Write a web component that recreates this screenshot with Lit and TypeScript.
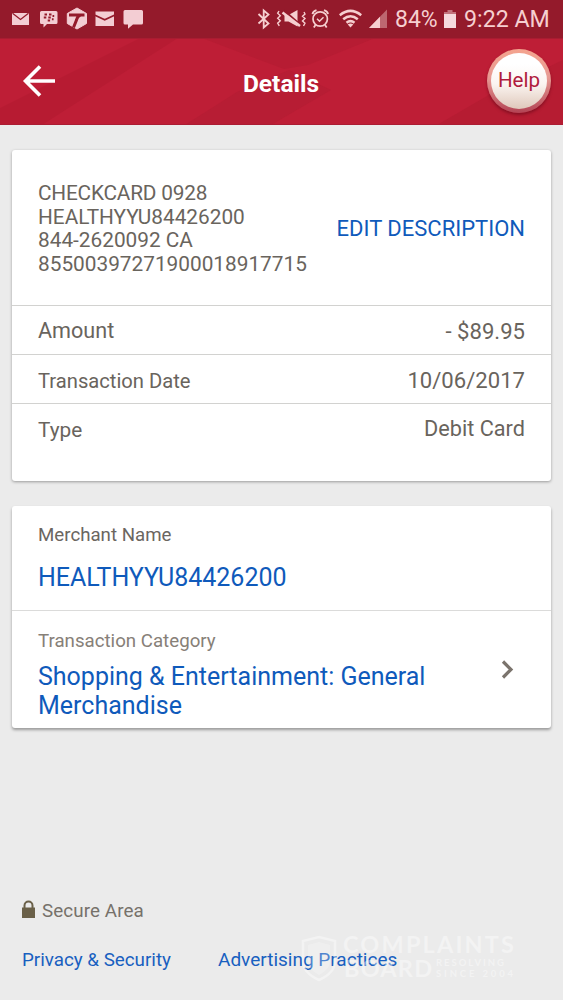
import { LitElement, html, css } from "lit";
import { customElement } from "lit/decorators.js";

@customElement("status-bar")
class StatusBar extends LitElement {
  static styles = css`
    :host { display: flex; height: 38px; background: #941a2b; color: #f6cfd0; font-size: 23.2px; line-height: 39px; white-space: nowrap; }
    svg { display: block; flex: none; }
    .right { margin-left: 107px; }
    .pct { margin-left: 5px; width: 49px; font-size: 23px; }
    .time { margin-left: 8px; }
  `;
  render() {
    return html`
      <svg width="150" height="38" viewBox="0 0 150 38" fill="#f3cdd3">
        <path d="M12 13h17v12H12z" />
        <path d="M12.5 13.3l8 6.2 8-6.2" fill="none" stroke="#941a2b" stroke-width="1.3" />
        <path d="M41.500 11h14.500q1.500 0 1.500 1.500v10q0 1.500-1.500 1.500H47l-3.500 3.500V24h-2q-1.500 0-1.500-1.500v-10q0-1.500 1.500-1.500z" />
        <path d="M44.500 14.500h2.500M49 14.500h2.500M43.800 17.500h2.500M48.300 17.500h2.500M52.500 16h1.700M47.700 20.500h2.400M51.900 19.200h1.700" stroke="#941a2b" stroke-width="1.900" fill="none" />
        <path d="M77 8l9.500 5.500v10L77 29l-9.700-5.500v-10z" stroke="#f3cdd3" stroke-linejoin="round" />
        <path d="M69 15h15.500M80.500 15q-3 1-4 5l-3 7.500" stroke="#941a2b" stroke-width="3" fill="none" />
        <path d="M95.500 11.500h18.500v14.500H95.500z" />
        <path d="M95 15.200l9.700 4.600 9.700-4.600" fill="none" stroke="#941a2b" stroke-width="1.700" />
        <path d="M125 10h16.500q1.500 0 1.500 1.500v11.500q0 1.500-1.500 1.500h-8.500l-5 4.200v-4.200h-3q-1.500 0-1.500-1.500V11.500q0-1.500 1.500-1.500z" />
      </svg>
      <svg class="right" width="133" height="38" viewBox="257 0 133 38" fill="none" stroke="#f6cfd0">
        <path d="M258.500 14l10 9.500-4.800 4V10.500l4.800 4-10 9" stroke-width="1.800" />
        <path d="M279 11l-1.300 2.200 2.600 2.500-2.600 2.500 2.600 2.500-2.600 2.500 1.600 2.600M304 12l1 2-2.500 2.300 2.500 2.300-2.500 2.300 2.500 2.300-1.500 2.800" stroke-width="1.400" />
        <path d="M284.500 15h4l9-5v16.500l-9-5h-4z" fill="#f6cfd0" stroke="none" />
        <path d="M284 10.500l16 14" stroke="#941a2b" stroke-width="2.200" />
        <path d="M282.500 12.500l17.500 13.500" stroke-width="2.500" />
        <circle cx="320.200" cy="19" r="7.200" stroke-width="1.700" />
        <path d="M317 18.800l2.500 2.500 4-4" stroke-width="1.500" />
        <path d="M312.500 14.200q.5-3 4-4M328 14.200q-.5-3-4-4M315.500 25l-1.700 2.500M325 25l1.700 2.500" stroke-width="1.800" />
        <path d="M339.800 15.200q10.700-8.600 21.400 0M343.200 19.200q7.300-6 14.600 0M346.500 22.700q4-3.200 8 0" stroke-width="2.500" />
        <path d="M347.700 24.500q2.800-1.800 5.600 0l-2.800 3z" fill="#f6cfd0" stroke="none" />
        <path d="M387 9.500V28h-18z" fill="#bd6770" stroke="none" />
        <path d="M380 16.700V28h-11z" fill="#f6cfd0" stroke="none" />
      </svg>
      <span class="pct">84%</span>
      <svg width="12" height="38" viewBox="0 0 12 38"><path d="M3.500 10h5v2H12v2H0v-2h3.500z" fill="#c3727c" /><path d="M0 14h12v14H0z" fill="#f6d9dd" /></svg>
      <span class="time">9:22 AM</span>
    `;
  }
}

@customElement("page-header")
class PageHeader extends LitElement {
  static styles = css`
    :host { display: grid; grid-template-columns: 80px 1fr 80px; align-items: center; height: 87px; position: relative; background: #be1e36; color: #fff; overflow: hidden; }
    .pattern { position: absolute; inset: 0; }
    .back { position: relative; margin: -2px 0 0 22px; display: block; }
    .title { position: relative; text-align: center; font-weight: 700; font-size: 24.5px; line-height: 28px; padding: 5px 1px 0 0; }
    .help { position: relative; box-sizing: border-box; width: 64px; height: 64px; margin: -1px 0 0 4px; border-radius: 50%; padding: 4px;
      background: linear-gradient(#f4a48f, #e79a93 45%, #b34354); box-shadow: 0 2px 3px rgba(90, 5, 20, 0.5); }
    .face { display: block; height: 56px; border-radius: 50%; background: linear-gradient(#fff 20%, #fbf5f1 55%, #dfc8bb); color: #b01c3d; font-size: 20.6px; line-height: 55px; text-align: center; white-space: nowrap; }
  `;
  render() {
    return html`
      <svg class="pattern" width="563" height="87" viewBox="0 0 563 87">
        <path d="M0 70L140 0h38L42 87H0z" fill="#b41b32" opacity=".75" />
        <path d="M202 0h173L308 27l-24 4z" fill="#b41b32" opacity=".7" />
        <path d="M185 87l52-33 52-22 42 20-60 35z" fill="#b01b31" opacity=".5" />
        <path d="M437 87l50-29 76-36v65z" fill="#b01b31" opacity=".6" />
        <path d="M0 .5h563" stroke="#a91c31" />
        <path d="M0 86.500h563" stroke="#ab1c33" />
      </svg>
      <svg class="back" width="34" height="34" viewBox="0 0 34 34" fill="none" stroke="#fff" stroke-width="3.600"><path d="M33 17H4M18 2.500L3.500 17 18 31.500" /></svg>
      <span class="title">Details</span>
      <span class="help"><span class="face">Help</span></span>
    `;
  }
}

@customElement("transaction-card")
class TransactionCard extends LitElement {
  static styles = css`
    :host { display: block; box-sizing: border-box; height: 330.500px; background: #fff; border-radius: 3px; color: #69645d; box-shadow: 0 1px 3px rgba(0, 0, 0, 0.35); }
    .top { display: flex; justify-content: space-between; align-items: center; box-sizing: border-box; height: 155px; padding: 0 26px; }
    .desc { font-size: 20.8px; line-height: 23.5px; white-space: pre; padding-top: 3px; }
    .desc .first { letter-spacing: -0.2px; }
    .edit { color: #0f5abb; font-size: 22px; padding-top: 2px; }
    .row { display: flex; justify-content: space-between; box-sizing: border-box; height: 49.200px; padding: 0 26px; border-top: 1px solid #d2d2d0; line-height: 50px; }
    .label { font-size: 20.2px; padding-top: 1px; }
    .amount { font-size: 21.6px; padding-top: 0; }
    .type { font-size: 20.8px; }
    .value { font-size: 22.1px; }
    .type + .value { font-size: 21.7px; }
  `;
  rows = [["Amount", "- $89.95", "label amount"], ["Transaction Date", "10/06/2017", "label"], ["Type", "Debit Card", "label type"]];
  render() {
    return html`
      <div class="top">
        <div class="desc"><span class="first">CHECKCARD 0928</span>${"\nHEALTHYYU84426200\n844-2620092 CA\n85500397271900018917715"}</div>
        <span class="edit">EDIT DESCRIPTION</span>
      </div>
      ${this.rows.map(([l, v, c]) => html`<div class="row"><span class=${c}>${l}</span><span class="value">${v}</span></div>`)}
    `;
  }
}

@customElement("merchant-card")
class MerchantCard extends LitElement {
  static styles = css`
    :host { display: block; box-sizing: border-box; height: 222px; background: #fff; border-radius: 3px; box-shadow: 0 2px 3px rgba(0, 0, 0, 0.35); }
    .merchant { box-sizing: border-box; height: 104px; padding: 17px 26px 0; }
    .label { color: #6b665f; font-size: 18.700px; line-height: 24px; }
    .label.light { color: #878078; }
    .name { color: #0f5abb; font-size: 25px; line-height: 29.500px; }
    .merchant .name { margin-top: 16px; }
    .category { display: flex; justify-content: space-between; box-sizing: border-box; height: 118px; padding: 18px 36px 0 26px; border-top: 1px solid #dbdbda; }
    .category .name { white-space: pre; margin-top: 9px; }
    svg { margin-top: 31px; }
  `;
  render() {
    return html`
      <div class="merchant"><div class="label">Merchant Name</div><div class="name">HEALTHYYU84426200</div></div>
      <div class="category">
        <div><div class="label light">Transaction Category</div><div class="name">${"Shopping & Entertainment: General\nMerchandise"}</div></div>
        <svg width="15" height="20" viewBox="0 0 15 20" fill="none" stroke="#7b746d" stroke-width="3.200"><path d="M3 1.500l8 8-8 8" /></svg>
      </div>
    `;
  }
}

@customElement("page-footer")
class PageFooter extends LitElement {
  static styles = css`
    :host { display: block; position: relative; height: 110px; box-sizing: border-box; padding: 9px 22px 0; color: #76716a; font-size: 18.800px; line-height: 24px; white-space: nowrap; }
    .secure { display: flex; gap: 7px; letter-spacing: 0.1px; }
    .links { display: flex; margin-top: 25px; color: #185fc0; }
    .privacy { width: 196px; }
    .ads { font-size: 19px; }
    .mark { position: absolute; left: 295px; top: 38px; }
  `;
  render() {
    return html`
      <div class="secure">
        <svg width="13" height="24" viewBox="0 0 13 24"><path d="M0 8.500h13v10.500H0z" fill="#6a6048" /><path d="M2.500 9V6.500a4 4 0 0 1 8 0V9" fill="none" stroke="#6a6048" stroke-width="2" /></svg>
        <span>Secure Area</span>
      </div>
      <div class="links"><span class="privacy">Privacy &amp; Security</span><span class="ads">Advertising Practices</span></div>
      <svg class="mark" width="230" height="60" viewBox="295 928 230 60" fill="#fff" opacity=".4" font-family="Lato, sans-serif" font-weight="700">
        <path d="M319 937l16 4v20q0 12-16 19-16-7-16-19v-20z" fill="none" stroke="#fff" stroke-width="2.500" />
        <path d="M319 942l11 3v16q0 8-11 14-11-6-11-14v-16z" opacity=".6" />
        <text x="343" y="953" font-size="23.500" textLength="171">COMPLAINTS</text>
        <text x="344" y="977" font-size="23.500" textLength="88">BOARD</text>
        <text x="436" y="966" font-size="9.500" textLength="68">RESOLVING</text>
        <text x="436" y="977" font-size="9.500" textLength="77">SINCE 2004</text>
      </svg>
    `;
  }
}

@customElement("app-root")
class AppRoot extends LitElement {
  static styles = css`
    :host { display: flex; flex-direction: column; width: 563px; height: 1000px; overflow: hidden; background: #ebebeb; font-family: Roboto, sans-serif; }
    .cards { display: flex; flex-direction: column; gap: 25px; padding: 25px 12px 0; flex: 1; }
  `;
  render() {
    return html`
      <status-bar></status-bar>
      <page-header></page-header>
      <div class="cards"><transaction-card></transaction-card><merchant-card></merchant-card></div>
      <page-footer></page-footer>
    `;
  }
}
